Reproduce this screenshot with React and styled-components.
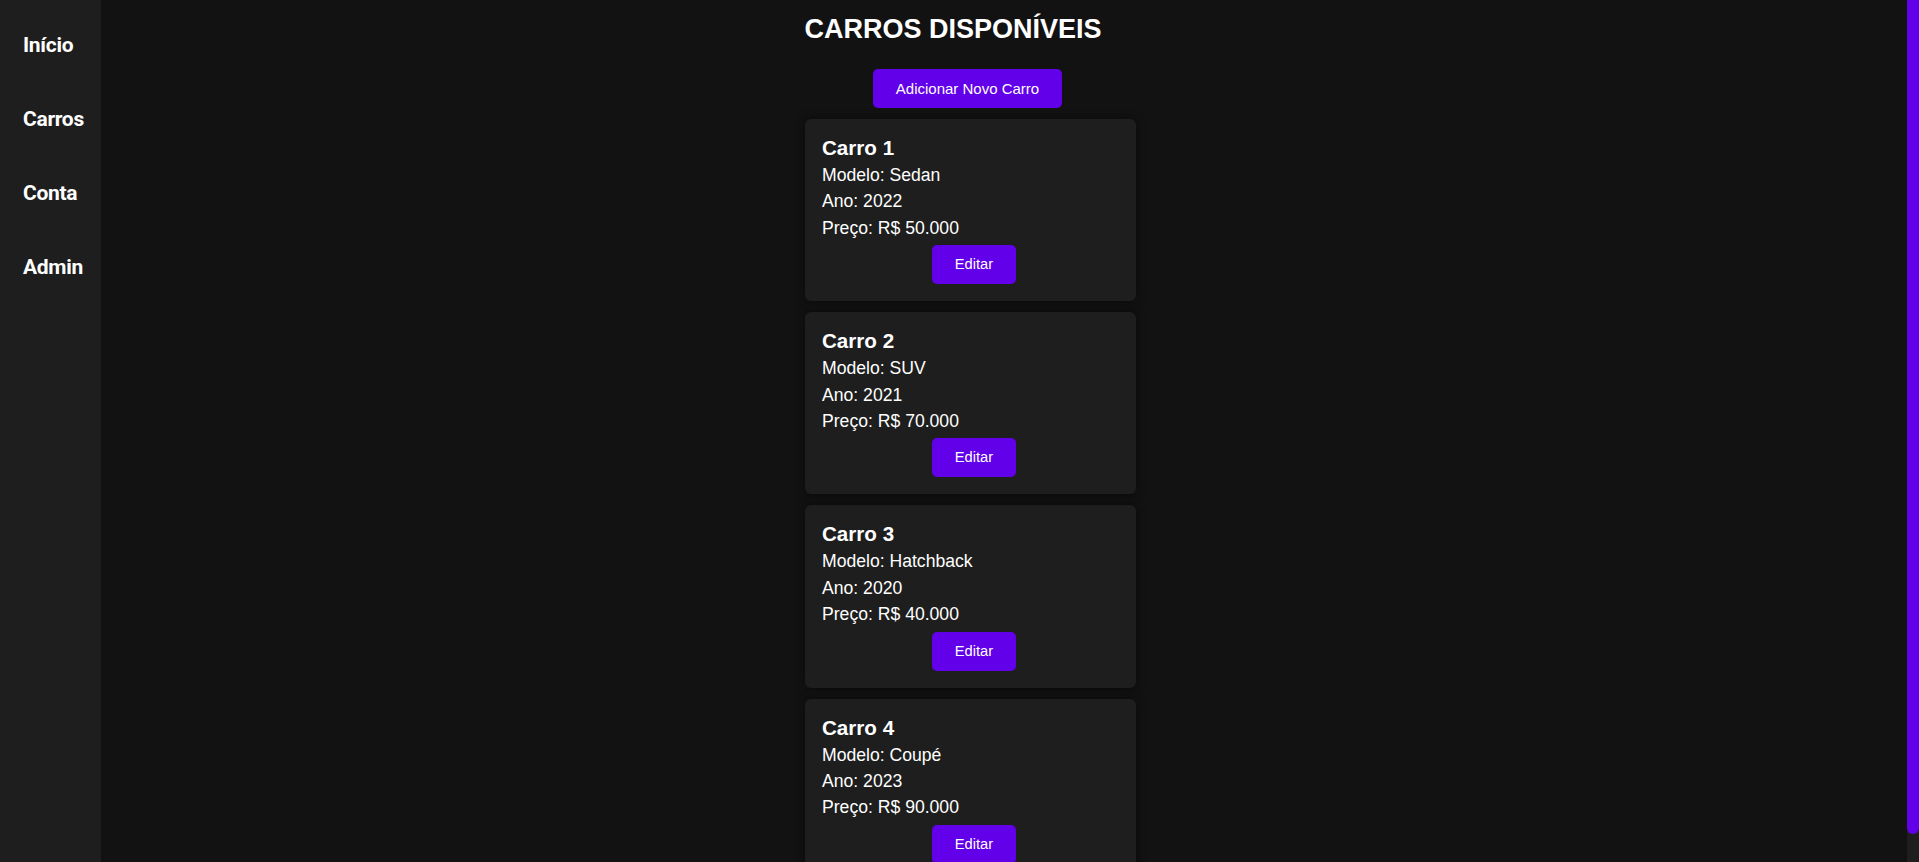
import React from "react";
import styled, { createGlobalStyle } from "styled-components";

const COLORS = {
  page: "#121212",
  panel: "#1e1e1e",
  primary: "#6200ea",
  text: "#ffffff",
};

const cars = [
  { id: 1, modelo: "Sedan", ano: 2022, preco: "50.000" },
  { id: 2, modelo: "SUV", ano: 2021, preco: "70.000" },
  { id: 3, modelo: "Hatchback", ano: 2020, preco: "40.000" },
  { id: 4, modelo: "Coupé", ano: 2023, preco: "90.000" },
];

const GlobalStyle = createGlobalStyle`
  html, body {
    margin: 0;
    padding: 0;
    background: ${COLORS.page};
    color: ${COLORS.text};
    font-family: "Liberation Sans", Arial, sans-serif;
  }
`;

const App = () => {
  return (
    <>
      <GlobalStyle />
      <Layout>
        <Sidebar>
          <NavList>
            <NavItem>Início</NavItem>
            <NavItem>Carros</NavItem>
            <NavItem>Conta</NavItem>
            <NavItem>Admin</NavItem>
          </NavList>
        </Sidebar>
        <Main>
          <Column>
            <Title>CARROS DISPONÍVEIS</Title>
            <AddButton>Adicionar Novo Carro</AddButton>
            <CardList>
              {cars.map((car) => (
                <Card key={car.id}>
                  <CarName>Carro {car.id}</CarName>
                  <Info>Modelo: {car.modelo}</Info>
                  <Info>Ano: {car.ano}</Info>
                  <Info>Preço: R$ {car.preco}</Info>
                  <EditButton>Editar</EditButton>
                </Card>
              ))}
            </CardList>
          </Column>
        </Main>
        <ScrollRail>
          <ScrollThumb />
        </ScrollRail>
      </Layout>
    </>
  );
};

const Layout = styled.div`
  display: grid;
  grid-template-columns: 101px 1fr 12px;
  min-height: 100vh;
`;

const Sidebar = styled.aside`
  background: ${COLORS.panel};
`;

const NavList = styled.ul`
  list-style: none;
  margin: 0;
  padding: 33px 0 0 23px;
  display: flex;
  flex-direction: column;
  gap: 50px;
`;

const NavItem = styled.li`
  font-family: Roboto, "Liberation Sans", sans-serif;
  font-weight: 700;
  font-size: 21px;
  line-height: 24px;
  letter-spacing: -0.3px;
  color: ${COLORS.text};
  cursor: pointer;
`;

const Main = styled.main`
  display: flex;
  flex-direction: column;
  align-items: center;
  padding: 14px 0 8px;
`;

const Column = styled.div`
  width: 331px;
  margin-right: 67px;
  display: flex;
  flex-direction: column;
  align-items: center;
`;

const Title = styled.h1`
  margin: 0 35px 24px 0;
  font-size: 27px;
  line-height: 31px;
  font-weight: 700;
  white-space: nowrap;
`;

const Button = styled.button`
  border: none;
  border-radius: 5px;
  background: ${COLORS.primary};
  color: ${COLORS.text};
  font-family: "Liberation Sans", Arial, sans-serif;
  font-size: 15px;
  line-height: 17px;
  padding: 11px 23px;
  cursor: pointer;
`;

const AddButton = styled(Button)`
  margin: 0 6px 11px 0;
`;

const EditButton = styled(Button)`
  align-self: center;
  margin: 4px 0 0 7px;
  font-size: 14.7px;
`;

const CardList = styled.div`
  display: flex;
  flex-direction: column;
  gap: 11px;
  width: 100%;
`;

const Card = styled.div`
  display: flex;
  flex-direction: column;
  background: ${COLORS.panel};
  border-radius: 6px;
  padding: 17px;
  box-shadow: 0 0 10px rgba(0, 0, 0, 0.5);
`;

const CarName = styled.h3`
  margin: 0 0 2px;
  font-size: 20.6px;
  line-height: 24px;
  font-weight: 700;
`;

const Info = styled.p`
  margin: 0;
  font-size: 17.6px;
  line-height: 26.4px;
`;

const ScrollRail = styled.div`
  background: ${COLORS.panel};
`;

const ScrollThumb = styled.div`
  height: 834px;
  background: ${COLORS.primary};
  border-radius: 0 0 6px 6px;
`;

export default App;
